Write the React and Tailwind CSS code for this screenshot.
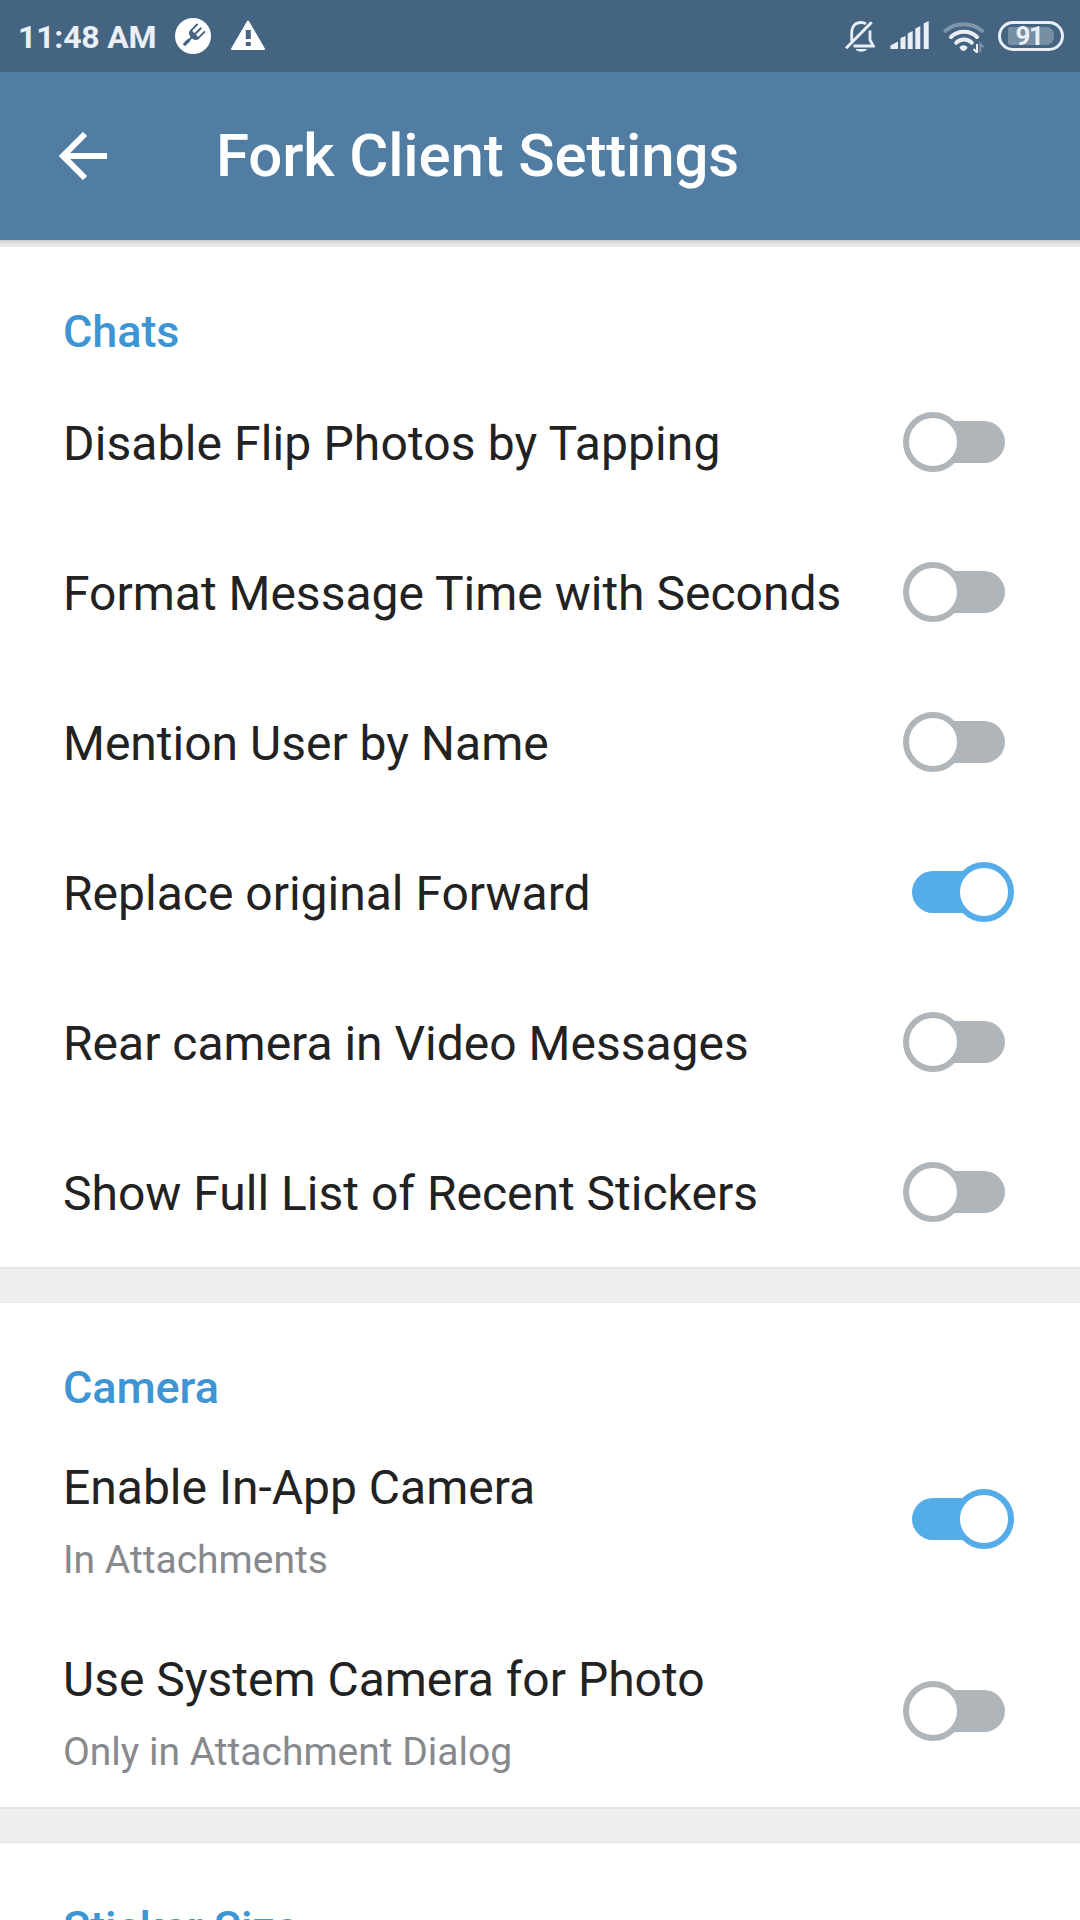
import { useState } from "react";

const CHAT_ROWS = [
  { id: "flip", title: "Disable Flip Photos by Tapping", on: false, loose: true },
  { id: "seconds", title: "Format Message Time with Seconds", on: false },
  { id: "mention", title: "Mention User by Name", on: false },
  { id: "forward", title: "Replace original Forward", on: true },
  { id: "rear", title: "Rear camera in Video Messages", on: false },
  { id: "stickers", title: "Show Full List of Recent Stickers", on: false },
];

const CAMERA_ROWS = [
  { id: "inapp", title: "Enable In-App Camera", subtitle: "In Attachments", on: true },
  { id: "system", title: "Use System Camera for Photo", subtitle: "Only in Attachment Dialog", on: false },
];

export default function App() {
  return (
    <div className="flex h-[1920px] w-[1080px] flex-col overflow-hidden bg-white font-['Roboto',sans-serif]">
      <StatusBar />
      <header className="flex h-[168px] shrink-0 items-center bg-[#517da2]">
        <button className="ml-[59px] h-12 w-12" aria-label="Back">
          <svg viewBox="0 0 48 48" className="h-12 w-12" fill="none" stroke="#fff" strokeWidth="6">
            <path d="M48 24H5M26 2 4 24 26 46" />
          </svg>
        </button>
        <h1 className="ml-[109px] text-[60px] leading-[70px] font-medium tracking-[-0.15px] text-white">
          Fork Client Settings
        </h1>
      </header>
      <div className="h-[7px] shrink-0 bg-linear-to-b from-[#cdcdcd] via-[#e3e3e3] to-[#e9e9e9]" />

      <SectionTitle>Chats</SectionTitle>
      {CHAT_ROWS.map((row) => <SettingRow key={row.id} {...row} />)}
      <Divider />

      <SectionTitle>Camera</SectionTitle>
      {CAMERA_ROWS.map((row) => <SettingRow key={row.id} {...row} />)}
      <Divider />

      <SectionTitle>Sticker Size</SectionTitle>
    </div>
  );
}

function SectionTitle({ children }) {
  return (
    <h2 className="h-[120px] shrink-0 pt-[50px] pl-[63px] text-[45px] leading-[70px] font-medium tracking-[-0.08px] text-[#3d95d4]">
      {children}
    </h2>
  );
}

function Divider() {
  return <div className="h-9 shrink-0 border-t-2 border-b border-t-[#e3e3e3] border-b-[#e3e3e3] bg-[#efefef]" />;
}

function SettingRow({ title, subtitle, on, loose = false }) {
  const [checked, setChecked] = useState(on);

  return (
    <div className={`flex shrink-0 items-center justify-between pr-[66px] pl-[63px] ${subtitle ? "h-48" : "h-[150px]"}`}>
      <div className={subtitle ? "pt-2.5" : "pt-[3px]"}>
        <p className={`text-[48px] leading-[70px] whitespace-nowrap text-[#222222] ${loose ? "tracking-[0.13px]" : ""}`}>
          {title}
        </p>
        {subtitle && <p className="mt-0.5 text-[39px] leading-[70px] text-[#87898d]">{subtitle}</p>}
      </div>
      <Toggle checked={checked} onChange={() => setChecked(!checked)} />
    </div>
  );
}

function Toggle({ checked, onChange }) {
  return (
    <button role="switch" aria-checked={checked} onClick={onChange} className="relative flex h-[60px] w-[111px] items-center px-[9px]">
      <span className={`h-[42px] w-full rounded-full ${checked ? "bg-[#54ace8]" : "bg-[#b0b5b9]"}`} />
      <span
        className={`absolute top-0 h-[60px] w-[60px] rounded-full border-[6px] bg-white ${
          checked ? "right-0 border-[#54ace8]" : "left-0 border-[#b0b5b9]"
        }`}
      />
    </button>
  );
}

function StatusBar() {
  return (
    <div className="flex h-[72px] shrink-0 items-center bg-[#446482] text-[#e9eff5]">
      <span className="ml-[18px] w-[157px] pt-0.5 text-[32px] leading-[40px] font-bold tracking-[-0.2px] whitespace-nowrap">
        11:48 AM
      </span>
      {/* fork badge */}
      <svg viewBox="0 0 36 36" className="h-9 w-9 shrink-0">
        <circle cx="18" cy="18" r="18" fill="#fff" />
        <g transform="rotate(45 18 18)" fill="none" stroke="#446482" strokeLinecap="round">
          <path d="M18 19v6" strokeWidth="2" />
          <path d="M18 24.500v5" strokeWidth="3.400" />
          <path d="M12.800 7v8.500M18 7v8.500M23.200 7v8.500" strokeWidth="1.900" />
          <path d="M11.900 15h12.200v1c0 2.500-2.500 4.500-6.100 4.500s-6.100-2-6.100-4.500z" fill="#446482" stroke="none" />
        </g>
      </svg>
      <svg viewBox="0 0 34 32" className="ml-5 h-8 w-[34px] shrink-0">
        <path d="M17 1.500 33 29H1z" fill="#fff" stroke="#fff" strokeWidth="2" strokeLinejoin="round" />
        <path d="M14.800 10h5v9h-5zM14.800 22h5v4h-5z" fill="#446482" />
      </svg>

      <svg viewBox="0 0 30 32" className="ml-auto h-8 w-[30px]" fill="none" stroke="currentColor" strokeWidth="2.800">
        <path d="M6.700 21v-8C6.700 6 10.500 2.500 16 2.500c1.800 0 3.600.4 5 1.300M25 10.500V20l3.300 6H8.500" />
        <path d="M1 28.300 26.700 2.300" strokeWidth="3" />
        <path d="M10.500 29h11.500c-1.500 3.600-10 3.600-11.500 0z" fill="currentColor" stroke="none" />
      </svg>
      <svg viewBox="0 0 39 28" className="mb-0.5 ml-[15px] h-7 w-[39px]" fill="currentColor">
        <path d="M.5 28v-3.500l7.500-4V28zM10.500 28V17l5-2v13zM17.700 28V12.500l5-2.500v18zM25.300 28V7.500l5-2.500v23zM33.700 28V2.500l5-2.500v28z" />
      </svg>
      <svg viewBox="0 0 42 33" className="ml-[13px] h-[33px] w-[42px]" fill="none" stroke="currentColor" strokeWidth="4">
        <path d="M3.500 10.800C13 1.900 30 1.900 40 10.800" opacity=".35" strokeLinecap="round" />
        <path d="M9 17C16 10 28 10 35 17M14.200 22.800C18 18.400 26 18.400 29.800 22.800" strokeLinecap="round" />
        <path d="M17.500 27.500c1.500-3 6.500-3 8 0 0 1-2.500 3.500-4 3.500s-4-2.500-4-3.500z" fill="currentColor" stroke="none" />
        <path d="M35 24v8.500l-3.500-3.500" strokeWidth="2" />
        <path d="M38.300 32.500V24l3 3" strokeWidth="2" opacity=".35" />
      </svg>
      <div className="mr-4 mb-px ml-[14px] flex h-[30px] w-[66px] items-center rounded-full border-3 border-current px-[7px]">
        <div className="flex h-[18px] w-full items-center justify-center rounded-r-lg rounded-l-xs bg-[#768fa5] pr-1 text-[26px] leading-none font-bold tracking-[-1.5px]">
          91
        </div>
      </div>
    </div>
  );
}
